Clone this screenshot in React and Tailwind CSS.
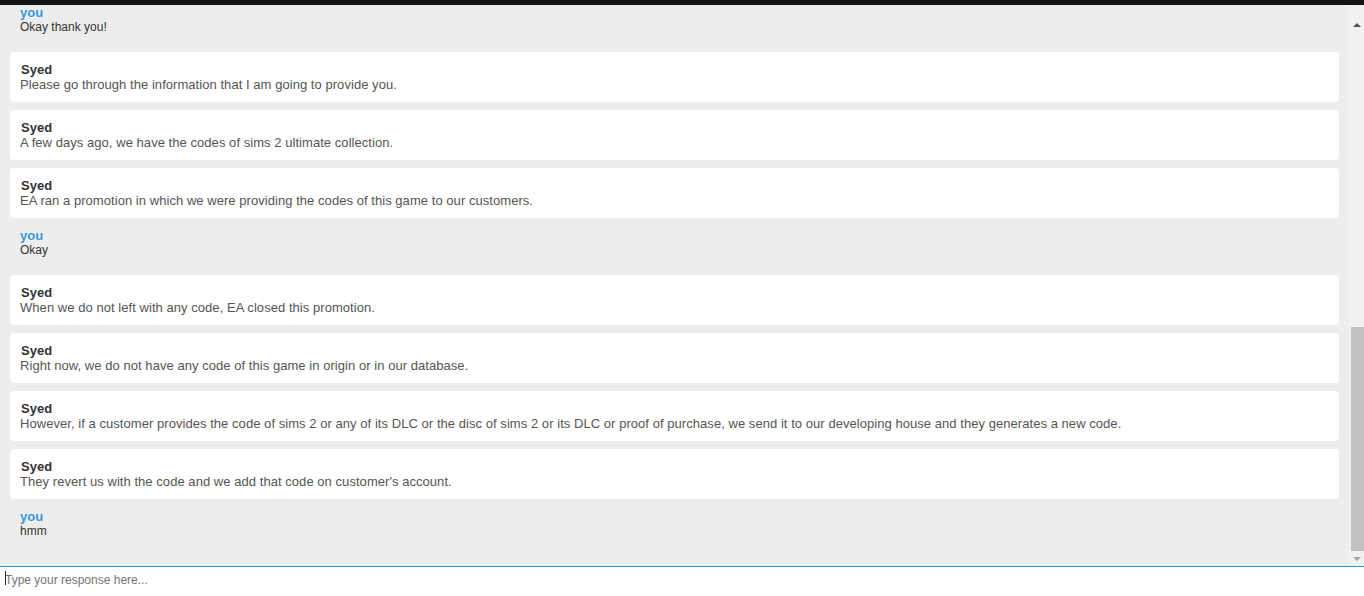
import React from "react";

const items = [
  { who: "you", text: "Okay thank you!" },
  { who: "Syed", text: "Please go through the information that I am going to provide you." },
  { who: "Syed", text: "A few days ago, we have the codes of sims 2 ultimate collection." },
  { who: "Syed", text: "EA ran a promotion in which we were providing the codes of this game to our customers." },
  { who: "you", text: "Okay" },
  { who: "Syed", text: "When we do not left with any code, EA closed this promotion." },
  { who: "Syed", text: "Right now, we do not have any code of this game in origin or in our database." },
  {
    who: "Syed",
    text:
      "However, if a customer provides the code of sims 2 or any of its DLC or the disc of sims 2 or its DLC or proof of purchase, we send it to our developing house and they generates a new code.",
  },
  { who: "Syed", text: "They revert us with the code and we add that code on customer's account." },
  { who: "you", text: "hmm" },
];

function Agent({ who, text }) {
  return (
    <div className="bg-white rounded-[4px] px-[10px] pt-[10px] pb-[10px] shrink-0">
      <div className="text-[13px] leading-[15px] font-bold text-[#333] pl-[1px]">{who}</div>
      <div className="text-[13px] leading-[15px] text-[#555] tracking-[0.05px]">{text}</div>
    </div>
  );
}

function You({ text }) {
  return (
    <div className="px-[10px] pt-[2px] pb-[9px] shrink-0">
      <div className="text-[13px] leading-[15px] font-bold text-[#3a9ad9]">you</div>
      <div className="text-[12px] leading-[15px] text-[#333]">{text}</div>
    </div>
  );
}

export default function App() {
  return (
    <div
      className="w-[1364px] h-[596px] flex flex-col bg-white overflow-hidden"
      style={{ fontFamily: '"Liberation Sans", Arial, sans-serif' }}
    >
      <div className="h-[5px] bg-[#141414] shrink-0" />
      <div className="flex flex-1 min-h-0 bg-[#ededed]">
        <div className="flex-1 min-w-0 flex flex-col justify-end gap-[8px] px-[10px] pb-[18px] overflow-hidden">
          {items.map((m, i) =>
            m.who === "you" ? <You key={i} text={m.text} /> : <Agent key={i} who={m.who} text={m.text} />
          )}
        </div>
        <div className="w-[15px] shrink-0 bg-[#f1f1f1] flex flex-col">
          <div className="h-[28px] shrink-0 flex items-end justify-center pb-[6px]">
            <svg width="8" height="4" viewBox="0 0 8 4">
              <polygon points="0,4 8,4 4,0" fill="#505050" />
            </svg>
          </div>
          <div className="h-[294px] shrink-0" />
          <div className="flex-1 ml-[2px] bg-[#c1c1c1]" />
          <div className="h-[15px] shrink-0 flex items-center justify-center">
            <svg width="8" height="4" viewBox="0 0 8 4">
              <polygon points="0,0 8,0 4,4" fill="#a3a3a3" />
            </svg>
          </div>
        </div>
      </div>
      <div className="h-[30px] shrink-0 border-t border-[#1f9ad6] relative bg-white">
        <span className="absolute left-[5px] top-[4px] w-[1px] h-[14px] bg-[#222]" />
        <input
          className="w-full h-[20px] pl-[5px] text-[12px] outline-none bg-white placeholder:text-[#757575]"
          style={{ fontFamily: '"Liberation Sans", Arial, sans-serif' }}
          placeholder="Type your response here..."
        />
      </div>
    </div>
  );
}
